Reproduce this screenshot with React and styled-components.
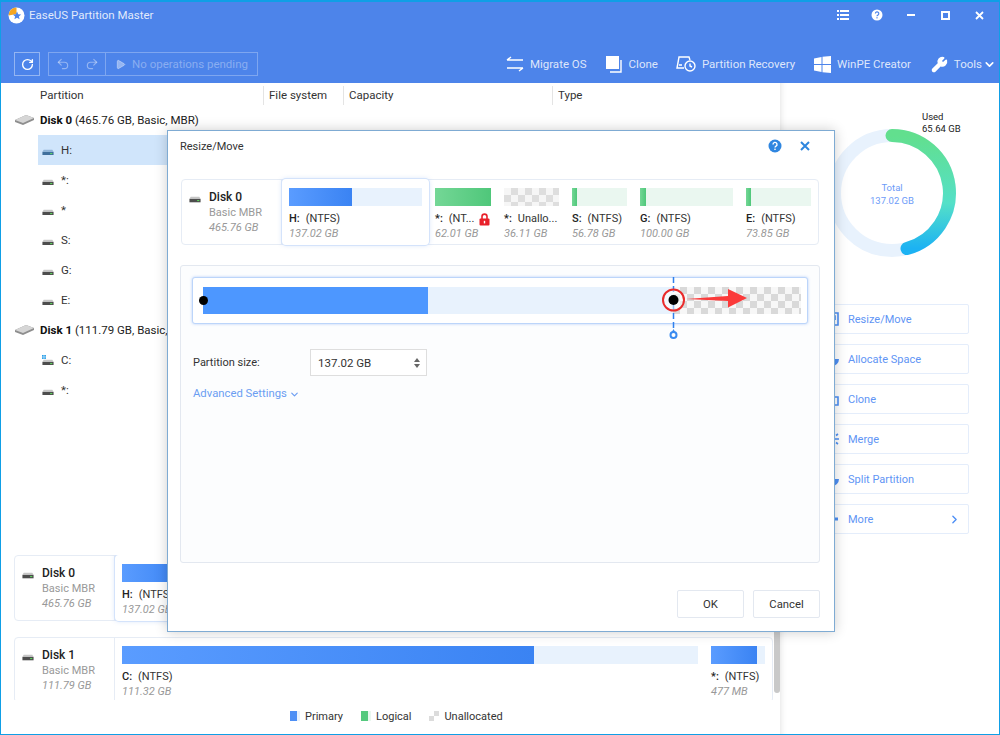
import styled, { createGlobalStyle } from "styled-components"
import { ChevronDown, ChevronRight, Play, RotateCw, Undo2, Redo2, Wrench } from "lucide-react"

const GlobalStyle = createGlobalStyle`
	html, body {
		margin: 0;
		padding: 0;
		background: #fff;
	}
	* {
		box-sizing: border-box;
	}
	body {
		font-family: Roboto, "Noto Sans", sans-serif;
		font-size: 11.5px;
		color: #222;
	}
`

const Frame = styled.div`
	position: relative;
	width: 1000px;
	height: 735px;
	overflow: hidden;
	display: flex;
	flex-direction: column;
	border: 1px solid #0f9fe6;
	border-top-width: 2px;
`

const Header = styled.header`
	height: 81px;
	flex: none;
	background: #4d84ea;
	color: #fff;
`

const TitleBar = styled.div`
	height: 26px;
	display: flex;
	align-items: center;
	padding: 0 13px 0 7px;
`

const Title = styled.div`
	margin-left: 4px;
	font-size: 11.5px;
	color: rgba(255, 255, 255, 0.85);
`

const WindowControls = styled.div`
	margin-left: auto;
	display: flex;
	align-items: center;
	gap: 20px;
`

const WindowButton = styled.div`
	width: 14px;
	height: 14px;
	display: flex;
	align-items: center;
	justify-content: center;
`

const Toolbar = styled.div`
	margin-top: 24px;
	height: 24px;
	display: flex;
	align-items: center;
	padding-left: 13px;
`

const ToolBox = styled.div`
	height: 24px;
	display: flex;
	align-items: stretch;
	border: 1px solid rgba(255, 255, 255, ${(p) => (p.$dim ? 0.28 : 0.4)});
	margin-right: 8px;
`

const ToolCell = styled.div`
	display: flex;
	align-items: center;
	justify-content: center;
	gap: 6px;
	width: ${(p) => p.$w}px;
	color: rgba(255, 255, 255, 0.35);
	font-size: 11.5px;
	& + & {
		border-left: 1px solid rgba(255, 255, 255, 0.28);
	}
`

const ToolLinks = styled.div`
	margin-left: auto;
	display: flex;
	align-items: center;
	padding-right: 3px;
`

const ToolLink = styled.div`
	display: flex;
	align-items: center;
	gap: 6px;
	margin-left: ${(p) => p.$gap}px;
	color: rgba(255, 255, 255, 0.82);
	font-size: 11.5px;
	white-space: nowrap;
`

const ToolChevron = styled.span`
	display: flex;
	margin-left: -5px;
`

const Body = styled.div`
	flex: 1;
	min-height: 0;
	display: flex;
`

const LeftPane = styled.section`
	width: 779px;
	flex: none;
	display: flex;
	flex-direction: column;
`

const TableHead = styled.div`
	height: 19px;
	flex: none;
	margin-top: 3px;
	display: grid;
	grid-template-columns: 262px 80px 209px 1fr;
`

const HeadCell = styled.div`
	padding-left: ${(p) => (p.$first ? 39 : 5)}px;
	border-left: ${(p) => (p.$first ? "none" : "1px solid #e4e4e4")};
	font-size: 11.5px;
	line-height: 19px;
	color: #333;
`

const Tree = styled.div`
	display: flex;
	flex-direction: column;
`

const DiskRow = styled.div`
	height: 30px;
	display: flex;
	align-items: center;
	gap: 6px;
	padding-left: 14px;
	font-size: 11.5px;
	white-space: nowrap;

	b {
		font-weight: 700;
		color: #111;
	}
`

const PartRow = styled.div`
	height: 30px;
	margin-left: 37px;
	padding-left: 4px;
	display: flex;
	align-items: center;
	gap: 7px;
	background: ${(p) => (p.$selected ? "#d0e5fb" : "transparent")};
	font-size: 11.5px;
	color: #333;
`

const CardList = styled.div`
	position: relative;
	margin-top: auto;
	height: 145px;
	flex: none;
	overflow: hidden;
	padding: 0 7px 0 13px;
	display: flex;
	flex-direction: column;
	gap: 16px;
`

const ScrollThumb = styled.div`
	position: absolute;
	right: 0;
	top: 77px;
	width: 6px;
	height: 61px;
	background: #c9c9c9;
	border-radius: 0 0 3px 3px;
`

const Legend = styled.div`
	height: 34px;
	flex: none;
	display: flex;
	align-items: center;
	padding: 0 0 2px 289px;
	font-size: 11px;
	color: #333;
`

const LegendItem = styled.div`
	display: flex;
	align-items: center;
	gap: 5px;
	margin-right: 18px;
`

const LegendSwatch = styled.span`
	width: 10px;
	height: 10px;
	background: ${(p) =>
		p.$kind === "logical"
			? "linear-gradient(90deg, #55c97e 70%, #e9f7ef 70%)"
			: p.$kind === "free"
				? "repeating-conic-gradient(#dcdcdc 0 25%, #fff 0 50%) 0 0 / 10px 10px"
				: "linear-gradient(90deg, #4d8ff5 65%, #e8f2fd 65%)"};
`

const RightPane = styled.aside`
	position: relative;
	flex: 1;
	padding: 45px 0 0 34px;
	box-shadow: inset 7px 0 7px -7px rgba(0, 0, 0, 0.14);
`

const Donut = styled.div`
	position: relative;
	width: 130px;
	height: 130px;
	margin-left: 13px;
`

const DonutCenter = styled.div`
	position: absolute;
	inset: 0;
	padding-top: 2px;
	display: flex;
	flex-direction: column;
	align-items: center;
	justify-content: center;
	font-size: 9.5px;
	line-height: 13px;
	color: #6d9cf8;
`

const UsedLabel = styled.div`
	position: absolute;
	left: 95px;
	top: -17px;
	font-size: 9.5px;
	line-height: 12px;
	color: #222;
	white-space: nowrap;
`

const Actions = styled.div`
	margin-top: 46px;
	width: 155px;
	display: flex;
	flex-direction: column;
	gap: 10px;
`

const ActionButton = styled.div`
	height: 30px;
	display: flex;
	align-items: center;
	gap: 9px;
	padding: 0 7px 0 10px;
	border: 1px solid #e4edfb;
	border-radius: 2px;
	color: #5f95f5;
	font-size: 11px;

	svg:last-child:not(:first-child) {
		margin-left: auto;
	}
`

const Card = styled.div`
	flex: none;
	height: 66px;
	display: flex;
	background: #fff;
	border: 1px solid #e6ecf5;
	border-radius: 4px;
`

const DiskInfo = styled.div`
	width: 100px;
	flex: none;
	padding: 10px 0 0 7px;
	border-right: 1px solid #e6ecf5;
	display: grid;
	grid-template-columns: 12px 1fr;
	column-gap: 8px;
	align-content: start;
	font-size: 11px;
	line-height: 15px;
	color: #999;
`

const DiskName = styled.div`
	font-size: 12px;
	font-weight: 500;
	color: #222;
	grid-column: 2;
`

const DiskIconSlot = styled.div`
	grid-row: 1;
	grid-column: 1;
	display: flex;
	align-items: center;
`

const DiskLine = styled.div`
	grid-column: 2;
	font-style: ${(p) => (p.$italic ? "italic" : "normal")};
`

const Slot = styled.div`
	position: relative;
	flex: ${(p) => (p.$w ? `none` : 1)};
	width: ${(p) => (p.$w ? `${p.$w}px` : "auto")};
	padding: 8px 7px 0 ${(p) => (p.$first ? 7 : 6)}px;
	min-width: 0;
	${(p) =>
		p.$selected
			? `
		margin: -1px 0;
		padding-top: 9px;
		background: #fff;
		border-radius: 4px;
		box-shadow: 0 0 0 1px #d4e3fb, 0 0 5px rgba(70, 130, 240, 0.25);
	`
			: ""}
`

const BarTrack = styled.div`
	height: 18px;
	background: ${(p) =>
		p.$tone === "free"
			? "repeating-conic-gradient(#dedede 0 25%, #f6f6f6 0 50%) 0 0 / 14px 14px"
			: p.$tone === "logical"
				? "#eaf7f0"
				: "#e8f2fd"};
`

const BarFill = styled.div`
	height: 100%;
	width: ${(p) => p.$pct}%;
	background: ${(p) =>
		p.$tone === "logical"
			? "linear-gradient(90deg, #74d796, #4fc77a)"
			: "linear-gradient(90deg, #5a9cff, #3a83f3)"};
`

const SlotLabel = styled.div`
	margin-top: 5px;
	display: flex;
	align-items: center;
	gap: 3px;
	font-size: 11px;
	line-height: 16px;
	color: #333;
	white-space: nowrap;

	b {
		font-weight: 500;
		margin-right: 3px;
		color: #222;
	}
`

const SlotSize = styled.div`
	font-size: 11px;
	line-height: 14px;
	font-style: italic;
	color: #999;
`

const Dialog = styled.div`
	position: absolute;
	left: 166px;
	top: 128px;
	width: 668px;
	height: 502px;
	background: #fff;
	border: 1px solid #7fabd3;
	box-shadow: 0 0 12px rgba(0, 0, 0, 0.2);
	padding: 0 14px 0 12px;
	display: flex;
	flex-direction: column;
`

const DialogHead = styled.div`
	height: 30px;
	flex: none;
	display: flex;
	align-items: center;
	font-size: 11px;
	color: #333;
`

const DialogActions = styled.div`
	margin-left: auto;
	display: flex;
	align-items: center;
	gap: 16px;
	padding-right: 8px;
`

const MapWrap = styled.div`
	margin: 18px 1px 0;
`

const ResizePanel = styled.div`
	margin-top: 20px;
	height: 298px;
	flex: none;
	padding: 11px;
	border: 1px solid #e3e8f0;
	border-radius: 3px;
	background: #fcfdfe;
`

const BarBox = styled.div`
	position: relative;
	height: 47px;
	padding: 9px 6px 9px 10px;
	background: #fff;
	border: 1px solid #bcd5fa;
	border-radius: 3px;
	box-shadow: 0 0 3px rgba(80, 140, 240, 0.4);
`

const BigBar = styled.div`
	height: 27px;
	display: flex;
`

const BigSegment = styled.div`
	width: ${(p) => p.$w}px;
	background: ${(p) =>
		p.$kind === "used"
			? "#4d97ff"
			: p.$kind === "free"
				? "repeating-conic-gradient(#d9d9d9 0 25%, #f7f7f7 0 50%) 0 0 / 14px 14px"
				: "#e8f2fd"};
`

const LeftHandle = styled.span`
	position: absolute;
	left: 6px;
	top: 18px;
	width: 9px;
	height: 9px;
	border-radius: 50%;
	background: #000;
`

const MarkerSvg = styled.svg`
	position: absolute;
	left: 467px;
	top: -1px;
	overflow: visible;
`

const FormRow = styled.div`
	margin-top: 25px;
	display: flex;
	align-items: center;
	padding-left: 1px;
`

const FormLabel = styled.div`
	width: 117px;
	font-size: 11px;
	color: #333;
`

const SizeInput = styled.div`
	width: 117px;
	height: 27px;
	display: flex;
	align-items: center;
	justify-content: space-between;
	padding: 0 7px;
	background: #fff;
	border: 1px solid #dedede;
	font-size: 11.5px;
	color: #333;
`

const Spinner = styled.div`
	display: flex;
	flex-direction: column;
	gap: 2px;
	margin-right: -1px;
`

const SpinArrow = styled.span`
	width: 0;
	height: 0;
	border-left: 3.5px solid transparent;
	border-right: 3.5px solid transparent;
	${(p) => (p.$up ? "border-bottom" : "border-top")}: 4px solid #666;
`

const AdvancedLink = styled.div`
	margin-top: 10px;
	padding-left: 1px;
	display: flex;
	align-items: center;
	gap: 2px;
	font-size: 11.3px;
	line-height: 16px;
	color: #6b9df2;
`

const DialogFooter = styled.div`
	margin-top: 27px;
	display: flex;
	justify-content: flex-end;
	gap: 9px;
`

const FooterButton = styled.div`
	width: 67px;
	height: 28px;
	display: flex;
	align-items: center;
	justify-content: center;
	border: 1px solid #e3e8f0;
	border-radius: 2px;
	background: #fff;
	font-size: 11.3px;
	color: #333;
`

const disk0Parts = [
	{ id: "h", name: "H:", fs: "(NTFS)", size: "137.02 GB", pct: 47, w: 147, selected: true },
	{ id: "star", name: "*:", fs: "(NT...", size: "62.01 GB", pct: 100, w: 69, tone: "logical", locked: true },
	{ id: "free", name: "*:", fs: "Unallo...", size: "36.11 GB", w: 68, tone: "free" },
	{ id: "s", name: "S:", fs: "(NTFS)", size: "56.78 GB", pct: 9, w: 68, tone: "logical" },
	{ id: "g", name: "G:", fs: "(NTFS)", size: "100.00 GB", pct: 6.5, w: 106, tone: "logical" },
	{ id: "e", name: "E:", fs: "(NTFS)", size: "73.85 GB", pct: 8, tone: "logical" },
]

const disk1Parts = [
	{ id: "c", name: "C:", fs: "(NTFS)", size: "111.32 GB", pct: 71.5, w: 590 },
	{ id: "star", name: "*:", fs: "(NTFS)", size: "477 MB", pct: 85 },
]

const treeRows = [
	{ disk: "Disk 0", info: "(465.76 GB, Basic, MBR)" },
	{ part: "H:", selected: true },
	{ part: "*:" },
	{ part: "*" },
	{ part: "S:" },
	{ part: "G:" },
	{ part: "E:" },
	{ disk: "Disk 1", info: "(111.79 GB, Basic, MBR)" },
	{ part: "C:", system: true },
	{ part: "*:" },
]

const actions = ["Resize/Move", "Allocate Space", "Clone", "Merge", "Split Partition", "More"]

function Logo() {
	return (
		<svg width="17" height="17" viewBox="0 0 17 17">
			<circle cx="8.5" cy="8.5" r="8" fill="#fff" />
			<path d="M8.5.5A8 8 0 0 0 .5 8.5L8.5 7Z" fill="#f5a623" />
			<path d="M9 4.5l1.2 2.7 2.9.3-2.2 1.9.7 2.9L9 10.8l-2.6 1.5.7-2.9L4.9 7.5l2.9-.3Z" fill="#4d84ea" />
		</svg>
	)
}

function DriveIcon({ blue, system }) {
	return (
		<svg width="12" height="10.3" viewBox="0 0 14 12" style={{ flex: "none" }}>
			{system && (
				<g fill="#2a9fe8">
					<rect x="0" y="0" width="2" height="2" />
					<rect x="2.6" y="0" width="2" height="2" />
					<rect x="0" y="2.6" width="2" height="2" />
					<rect x="2.6" y="2.6" width="2" height="2" />
				</g>
			)}
			<path d="M2 5.5h10l1.5 2.5h-13Z" fill={blue ? "#8fb4d8" : "#c6c6c6"} />
			<rect x="0.5" y="8" width="13" height="4" fill={blue ? "#3f6f9c" : "#4d4d4d"} />
			<rect x="9.5" y="9.4" width="2.5" height="1.2" fill="#5fe05f" />
		</svg>
	)
}

function DiskGlyph() {
	return (
		<svg width="19" height="10" viewBox="0 0 19 10">
			<path d="M0 5 L11 0 L19 3 V5 L8 10 L0 7Z" fill="#8e8e8e" />
			<path d="M0 5 L11 0 L19 3 L8 8Z" fill="#d6d6d6" />
		</svg>
	)
}

function RedLock() {
	return (
		<svg width="11" height="13" viewBox="0 0 11 13" style={{ marginLeft: 2, flex: "none" }}>
			<path d="M3 6V3.6a2.5 2.5 0 0 1 5 0V6" fill="none" stroke="#e8202a" strokeWidth="1.6" />
			<rect x="0.5" y="5.5" width="10" height="7" rx="1" fill="#e8202a" />
			<rect x="4.8" y="7.8" width="1.4" height="2.6" fill="#fff" />
		</svg>
	)
}

function DiskCard({ name, kind, size, parts }) {
	return (
		<Card>
			<DiskInfo>
				<DiskIconSlot>
					<DriveIcon />
				</DiskIconSlot>
				<DiskName>{name}</DiskName>
				<DiskLine>{kind}</DiskLine>
				<DiskLine $italic>{size}</DiskLine>
			</DiskInfo>
			{parts.map((part, i) => (
				<Slot key={part.id} $w={part.w} $selected={part.selected} $first={i === 0}>
					<BarTrack $tone={part.tone}>
						{part.tone !== "free" && <BarFill $tone={part.tone} $pct={part.pct} />}
					</BarTrack>
					<SlotLabel>
						<b>{part.name}</b>
						{part.fs}
						{part.locked && <RedLock />}
					</SlotLabel>
					<SlotSize>{part.size}</SlotSize>
				</Slot>
			))}
		</Card>
	)
}

function ActionIcon({ index }) {
	const shapes = [
		<path key="a" d="M1 1h12v12H1ZM4 10l6-6M6 4h4v4" fill="none" stroke="#4d8ff5" strokeWidth="1.6" />,
		<path key="b" d="M7 0a7 7 0 1 0 7 7H7Z" fill="#4d8ff5" />,
		<path key="c" d="M1 1h8v8H1ZM5 9v4h8V5H9" fill="none" stroke="#4d8ff5" strokeWidth="1.6" />,
		<path key="d" d="M1 2h5l3 5-3 5H1M14 7H8M11 3.5 13 2M11 10.5 13 12" fill="none" stroke="#4d8ff5" strokeWidth="1.6" />,
		<path key="e" d="M7 0a7 7 0 1 0 7 7H7Z" fill="#4d8ff5" />,
		<g key="f" fill="#4d8ff5">
			<rect x="0" y="5.5" width="3" height="3" />
			<rect x="5" y="5.5" width="3" height="3" />
			<rect x="10" y="5.5" width="3" height="3" />
		</g>,
	]
	return (
		<svg width="14" height="14" viewBox="0 0 14 14" style={{ flex: "none" }}>
			{shapes[index]}
		</svg>
	)
}

export default function App() {
	return (
		<Frame>
			<GlobalStyle />
			<Header>
				<TitleBar>
					<Logo />
					<Title>EaseUS Partition Master</Title>
					<WindowControls>
						<WindowButton>
							<svg width="12" height="10" viewBox="0 0 12 10" fill="#fff">
								<rect x="0" y="0" width="2" height="2" />
								<rect x="3" y="0" width="9" height="2" />
								<rect x="0" y="4" width="2" height="2" />
								<rect x="3" y="4" width="9" height="2" />
								<rect x="0" y="8" width="2" height="2" />
								<rect x="3" y="8" width="9" height="2" />
							</svg>
						</WindowButton>
						<WindowButton>
							<svg width="12" height="12" viewBox="0 0 12 12">
								<circle cx="6" cy="6" r="5.5" fill="#fff" />
								<path d="M4.4 4.6a1.7 1.7 0 1 1 2.5 1.5c-.6.3-.9.6-.9 1.2" fill="none" stroke="#4d84ea" strokeWidth="1.2" />
								<rect x="5.4" y="8.2" width="1.2" height="1.2" fill="#4d84ea" />
							</svg>
						</WindowButton>
						<WindowButton>
							<svg width="8" height="2" viewBox="0 0 8 2">
								<rect width="8" height="2" fill="#fff" />
							</svg>
						</WindowButton>
						<WindowButton>
							<svg width="9" height="9" viewBox="0 0 9 9">
								<rect x="1" y="1" width="7" height="7" fill="none" stroke="#fff" strokeWidth="2" />
							</svg>
						</WindowButton>
						<WindowButton>
							<svg width="9" height="9" viewBox="0 0 9 9">
								<path d="M1 1l7 7M8 1L1 8" stroke="#fff" strokeWidth="1.8" />
							</svg>
						</WindowButton>
					</WindowControls>
				</TitleBar>
				<Toolbar>
					<ToolBox>
						<ToolCell $w={24}>
							<RotateCw size={13} color="#fff" strokeWidth={2.5} />
						</ToolCell>
					</ToolBox>
					<ToolBox $dim>
						<ToolCell $w={28}>
							<Undo2 size={14} color="rgba(255,255,255,.4)" />
						</ToolCell>
						<ToolCell $w={28}>
							<Redo2 size={14} color="rgba(255,255,255,.4)" />
						</ToolCell>
						<ToolCell $w={152}>
							<Play size={11} fill="rgba(255,255,255,.4)" color="rgba(255,255,255,.4)" />
							No operations pending
						</ToolCell>
					</ToolBox>
					<ToolLinks>
						<ToolLink $gap={0}>
							<svg width="18" height="16" viewBox="0 0 18 16" fill="none" stroke="#fff" strokeWidth="1.4">
								<path d="M17 4H1M5 1L1 4M1 12h16M13 15l4-3" />
							</svg>
							Migrate OS
						</ToolLink>
						<ToolLink $gap={19}>
							<svg width="17" height="17" viewBox="0 0 17 17">
								<rect x="0" y="0" width="13" height="13" fill="#fff" />
								<path d="M15 4v12H4" fill="none" stroke="#fff" strokeWidth="1.4" />
							</svg>
							Clone
						</ToolLink>
						<ToolLink $gap={18}>
							<svg width="20" height="18" viewBox="0 0 20 18" fill="none" stroke="#fff" strokeWidth="1.4">
								<path d="M8 13H1l2-11h10l1 3" />
								<circle cx="14" cy="11" r="5" />
								<path d="M14 8.5V11l2 1M3 10h3" />
							</svg>
							Partition Recovery
						</ToolLink>
						<ToolLink $gap={19}>
							<svg width="17" height="17" viewBox="0 0 17 17" fill="#fff">
								<path d="M0 2.5l7.5-1.5v7H0ZM8.5.8L17 0v8H8.5ZM0 9h7.5v7L0 14.5ZM8.5 9H17v8l-8.5-.8Z" />
							</svg>
							WinPE Creator
						</ToolLink>
						<ToolLink $gap={20}>
							<Wrench size={17} color="#fff" fill="#fff" />
							Tools
							<ToolChevron>
								<ChevronDown size={13} color="#fff" strokeWidth={3} />
							</ToolChevron>
						</ToolLink>
					</ToolLinks>
				</Toolbar>
			</Header>
			<Body>
				<LeftPane>
					<TableHead>
						<HeadCell $first>Partition</HeadCell>
						<HeadCell>File system</HeadCell>
						<HeadCell>Capacity</HeadCell>
						<HeadCell>Type</HeadCell>
					</TableHead>
					<Tree>
						{treeRows.map((row, i) =>
							row.disk ? (
								<DiskRow key={i}>
									<DiskGlyph />
									<span>
										<b>{row.disk}</b> {row.info}
									</span>
								</DiskRow>
							) : (
								<PartRow key={i} $selected={row.selected}>
									<DriveIcon blue={row.selected} system={row.system} />
									{row.part}
								</PartRow>
							)
						)}
					</Tree>
					<CardList>
						<DiskCard name="Disk 0" kind="Basic MBR" size="465.76 GB" parts={disk0Parts} />
						<DiskCard name="Disk 1" kind="Basic MBR" size="111.79 GB" parts={disk1Parts} />
						<ScrollThumb />
					</CardList>
					<Legend>
						<LegendItem>
							<LegendSwatch />
							Primary
						</LegendItem>
						<LegendItem>
							<LegendSwatch $kind="logical" />
							Logical
						</LegendItem>
						<LegendItem>
							<LegendSwatch $kind="free" />
							Unallocated
						</LegendItem>
					</Legend>
				</LeftPane>
				<RightPane>
					<Donut>
						<svg width="130" height="130" viewBox="0 0 130 130">
							<defs>
								<linearGradient id="used" x1="0" y1="0" x2="0" y2="1">
									<stop offset="0" stopColor="#62df8e" />
									<stop offset="0.6" stopColor="#54e0c8" />
									<stop offset="1" stopColor="#1cb2f3" />
								</linearGradient>
							</defs>
							<circle cx="65" cy="65" r="57.5" fill="none" stroke="#e8f2fd" strokeWidth="13" />
							<path d="M65 7.5A57.5 57.5 0 0 1 80 120.5" fill="none" stroke="url(#used)" strokeWidth="13" strokeLinecap="round" />
						</svg>
						<DonutCenter>
							<span>Total</span>
							<span>137.02 GB</span>
						</DonutCenter>
						<UsedLabel>
							Used
							<br />
							65.64 GB
						</UsedLabel>
					</Donut>
					<Actions>
						{actions.map((label, i) => (
							<ActionButton key={label}>
								<ActionIcon index={i} />
								{label}
								{label === "More" && <ChevronRight size={13} color="#4d8ff5" strokeWidth={2.5} />}
							</ActionButton>
						))}
					</Actions>
				</RightPane>
			</Body>
			<Dialog>
				<DialogHead>
					Resize/Move
					<DialogActions>
						<svg width="14" height="14" viewBox="0 0 14 14">
							<circle cx="7" cy="7" r="6.5" fill="#2f86e0" />
							<path d="M5 5.4a2 2 0 1 1 3 1.7c-.7.4-1 .7-1 1.4" fill="none" stroke="#fff" strokeWidth="1.4" />
							<rect x="6.3" y="9.6" width="1.4" height="1.4" fill="#fff" />
						</svg>
						<svg width="14" height="14" viewBox="0 0 14 14">
							<path d="M3 3l8 8M11 3l-8 8" stroke="#2e86de" strokeWidth="2" />
						</svg>
					</DialogActions>
				</DialogHead>
				<MapWrap>
					<DiskCard name="Disk 0" kind="Basic MBR" size="465.76 GB" parts={disk0Parts} />
				</MapWrap>
				<ResizePanel>
					<BarBox>
						<BigBar>
							<BigSegment $kind="used" $w={225} />
							<BigSegment $w={245} />
							<BigSegment $kind="free" $w={128} />
						</BigBar>
						<LeftHandle />
						<MarkerSvg width="90" height="65" viewBox="0 0 90 65">
							<path d="M13.5 0V53" stroke="#2f80ed" strokeWidth="1.5" strokeDasharray="6 3" />
							<circle cx="13.5" cy="58" r="3" fill="#fff" stroke="#3a8bf0" strokeWidth="2" />
							<path d="M13.5 52l2 3.5h-4Z" fill="#3a8bf0" />
							<circle cx="13.5" cy="23" r="10.5" fill="#fff" fillOpacity="0.5" stroke="#ea2b2b" strokeWidth="2" />
							<circle cx="13.5" cy="23" r="5" fill="#000" />
							<path d="M26 22L68 19V12L87 21L68 30.5V24Z" fill="#fb3a3a" />
						</MarkerSvg>
					</BarBox>
					<FormRow>
						<FormLabel>Partition size:</FormLabel>
						<SizeInput>
							137.02 GB
							<Spinner>
								<SpinArrow $up />
								<SpinArrow />
							</Spinner>
						</SizeInput>
					</FormRow>
					<AdvancedLink>
						Advanced Settings
						<ChevronDown size={11} strokeWidth={2.5} />
					</AdvancedLink>
				</ResizePanel>
				<DialogFooter>
					<FooterButton>OK</FooterButton>
					<FooterButton>Cancel</FooterButton>
				</DialogFooter>
			</Dialog>
		</Frame>
	)
}
